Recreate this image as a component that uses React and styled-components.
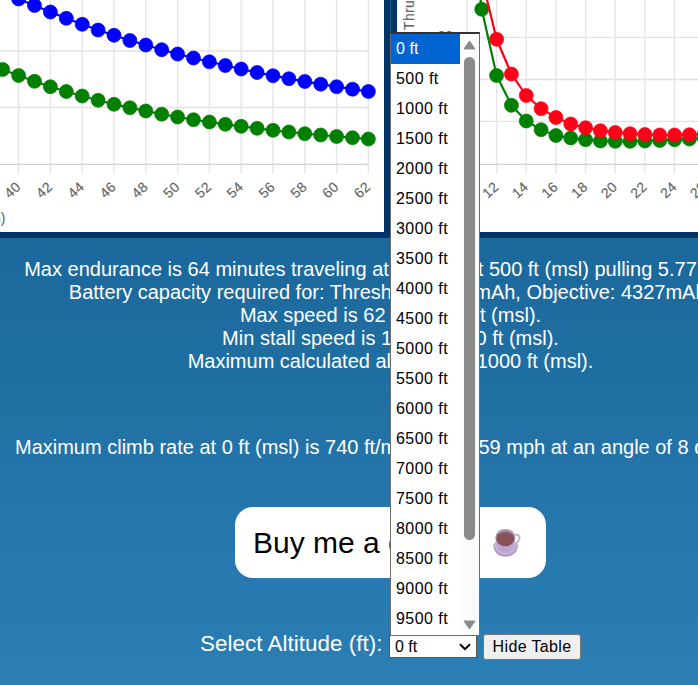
import React from 'react';
import styled, { createGlobalStyle } from 'styled-components';

const Global = createGlobalStyle`
  * { box-sizing: border-box; }
  html, body { margin: 0; height: 685px; overflow: hidden; }
  body { font-family: "Liberation Sans", Arial, sans-serif; }
`;

const Page = styled.div`
  position: relative;
  width: 698px;
  height: 685px;
  overflow: hidden;
  background: linear-gradient(to bottom, #135e8f 0, #1b689b 238px, #2b7fb5 685px);
`;

const Content = styled.div`
  width: 781px;
  display: flex;
  flex-direction: column;
  align-items: center;
`;

const Charts = styled.div`
  width: 781px;
  height: 238px;
  display: flex;
  gap: 1px;
`;

const ChartPanel = styled.div`
  flex: 0 0 390px;
  height: 238px;
  background: #fff;
  border: solid #003366;
  border-width: ${(p) => (p.$first ? '0 6px 6px 0' : '0 0 6px 6px')};
  overflow: hidden;
  svg { display: block; }
`;

const ChartText = styled.text`
  font-family: "Liberation Sans", Arial, sans-serif;
  font-size: 14px;
  fill: #666;
  stroke: #666;
  stroke-width: 0.15px;
  letter-spacing: ${(p) => p.$spacing || 0}px;
`;

const Stats = styled.section`
  margin-top: 20px;
  font-size: 20px;
  line-height: 23px;
  color: #fff;
  text-align: center;
  white-space: nowrap;
`;

const Stat = styled.div`
  height: 23px;
  margin-top: ${(p) => p.$gap || 0}px;
  padding-left: ${(p) => p.$indent || 0}px;
`;

const CoffeeButton = styled.button`
  margin-top: 48px;
  width: 311px;
  height: 71px;
  border: 0;
  border-radius: 18px;
  padding: 0 25px 0 18px;
  background: #fff;
  color: #000;
  display: flex;
  align-items: center;
  justify-content: space-between;
  font: 30px "Liberation Sans", Arial, sans-serif;
`;

const Controls = styled.div`
  width: 381px;
  height: 26px;
  margin-top: 56px;
  display: flex;
  align-items: flex-start;
`;

const Label = styled.label`
  width: 189px;
  font-size: 22.4px;
  line-height: 26px;
  letter-spacing: 0.04px;
  margin-top: -3px;
  color: #fff;
  white-space: nowrap;
`;

const Select = styled.div`
  width: 88px;
  height: 23px;
  margin-top: 1px;
  border: 1px solid #555;
  background: #fff;
  color: #000;
  padding: 0 5px;
  display: flex;
  align-items: center;
  justify-content: space-between;
  font-size: 16px;
  line-height: 20px;
`;

const HideButton = styled.button`
  width: 98px;
  height: 26px;
  margin-left: 6px;
  padding: 0;
  border: 1px solid #767676;
  border-radius: 3px;
  background: #efefef;
  color: #000;
  font: 16px "Liberation Sans", Arial, sans-serif;
  letter-spacing: 0.35px;
`;

const Popup = styled.div`
  position: absolute;
  left: 390px;
  top: 32px;
  width: 90px;
  height: 604px;
  border: 1px solid #6b6b6b;
  border-top: 2px solid #333;
  background: #fff;
  display: flex;
`;

const Options = styled.div`
  width: 69px;
`;

const Option = styled.div`
  height: 30px;
  padding-left: 5px;
  font-size: 16px;
  line-height: 29px;
  letter-spacing: ${(p) => (p.$selected ? 0.1 : 0.45)}px;
  white-space: nowrap;
  background: ${(p) => (p.$selected ? '#0064d2' : '#fff')};
  color: ${(p) => (p.$selected ? '#fff' : '#000')};
`;

const ScrollTrack = styled.div`
  width: 19px;
  height: 601px;
  background: #fcfcfc;
  display: flex;
  flex-direction: column;
  align-items: center;
  padding: 6px 0 5px;
  svg { display: block; }
`;

const Thumb = styled.div`
  width: 11px;
  height: 483px;
  margin: 7px 0 auto;
  border-radius: 6px;
  background: #8b8b8b;
`;

function Series({ points, color }) {
  return (
    <g fill={color} stroke={color}>
      <polyline points={points.map((p) => p.join(',')).join(' ')} fill="none" strokeWidth="2.2" />
      {points.map(([x, y]) => <circle key={x} cx={x} cy={y} r="7" strokeWidth="0.7" />)}
    </g>
  );
}

function XTicks({ first, count, x0, step }) {
  return Array.from({ length: count }, (_, i) => {
    const x = x0 + i * step;
    return (
      <g key={i}>
        <path d={`M${x} 0V174`} stroke="#e6e6e6" strokeWidth="1.4" />
        <ChartText $spacing={0.3} textAnchor="end" transform={`translate(${x + 3} 188) rotate(-43)`}>{first + i * 2}</ChartText>
      </g>
    );
  });
}

const series = (x0, step, ys) => ys.map((y, i) => [x0 + i * step, y]);

const L = 15.9;
const blue = series(18.6 - L, L, [-8, -1, 5.5, 12, 18.3, 24.3, 30, 35.3, 40.5, 45, 49.7, 54, 58, 61.8, 65.5, 69, 72.5, 75.7, 78.7, 81.5, 84.2, 86.7, 89.2, 91.5]);
const greenLeft = series(18.6 - L, L, [69.5, 75.5, 81.3, 86.7, 91.5, 96, 100.3, 104.3, 107.7, 111, 114.2, 117, 119.7, 122, 124.3, 126.3, 128.3, 130.3, 132, 133.7, 135, 136.5, 137.7, 139]);
const R = 14.83;
const greenRight = series(99.6 - 2 * R, R, [-105, 9.3, 75.5, 105.3, 121, 129.7, 135.5, 138, 139.7, 141, 141.3, 141.3, 141, 140.5, 139.7, 139, 138]);
const red = series(99.6 - R, R, [-22, 39.3, 74, 95.5, 108.7, 117.5, 124, 127.7, 130.7, 132.5, 133.7, 134.5, 135, 135, 134.7, 134]);

function EnduranceChart() {
  return (
    <svg width="384" height="232">
      <path d="M0 51H368M0 107.5H368" stroke="#e2e2e2" strokeWidth="1.3" />
      <XTicks first={40} count={12} x0={18.6} step={L * 2} />
      <path d="M0 164.3H368" stroke="#d0d0d0" strokeWidth="1.3" />
      <Series points={greenLeft} color="#008000" />
      <Series points={blue} color="#0000ff" />
      <ChartText x="5.500" y="223" textAnchor="end">(mph)</ChartText>
    </svg>
  );
}

function ThrustChart() {
  return (
    <svg width="384" height="232">
      <path d="M60 37.4H384M60 79.5H384M60 121.4H384M70 0V174" stroke="#e2e2e2" strokeWidth="1.3" />
      <XTicks first={12} count={8} x0={99.6} step={R * 2} />
      <path d="M60 164.3H384" stroke="#d0d0d0" strokeWidth="1.3" />
      <Series points={greenRight} color="#008000" />
      <Series points={red} color="#ff0019" />
      <ChartText x="56" y="40.5" textAnchor="end">20</ChartText>
      <ChartText $spacing={0.35} transform="translate(17 30) rotate(-90)">Thrust (oz)</ChartText>
    </svg>
  );
}

function Cup() {
  return (
    <svg width="28" height="30" viewBox="0 0 28 30">
      <path d="M0.300 17C0.300 24 5.500 28.800 12.500 28.800S25 24 25 17C24 12 1.500 11 0.300 17z" fill="#ad98c7" />
      <path d="M1 16.500C2 22.500 6.500 26.800 12.500 26.800S23 23 24.200 17C22 12 3 11 1 16.500z" fill="#c5b4d8" />
      <path d="M21 7c4.500-1.300 6.500 1.500 5 5-1 2.300-2.800 3.400-5.200 3.700" fill="none" stroke="#c0b0d2" strokeWidth="1.900" />
      <path d="M2.500 10C2.500 18 5.500 25 12.300 25S22.100 18 22.100 10z" fill="#baa7d0" />
      <ellipse cx="12.300" cy="9.300" rx="9.900" ry="8.400" fill="#a998b7" />
      <ellipse cx="12.300" cy="10.800" rx="9" ry="7.400" fill="#875156" />
      <path d="M4 7.800C6 2.800 18.600 2.800 20.600 7.800C17 4.800 8 4.800 4 7.800z" fill="#806a7c" />
    </svg>
  );
}

export default function App() {
  return (
    <Page>
      <Global />
      <Content>
        <Charts>
          <ChartPanel $first><EnduranceChart /></ChartPanel>
          <ChartPanel><ThrustChart /></ChartPanel>
        </Charts>
        <Stats>
          <Stat>Max endurance is 64 minutes traveling at 20 mph at 500 ft (msl) pulling 5.77 amps.</Stat>
          <Stat>Battery capacity required for: Threshold: 3245mAh, Objective: 4327mAh.</Stat>
          <Stat>Max speed is 62 mph at 0 ft (msl).</Stat>
          <Stat>Min stall speed is 16 mph at 0 ft (msl).</Stat>
          <Stat>Maximum calculated altitude is 21000 ft (msl).</Stat>
          <Stat $gap={63} $indent={6}>Maximum climb rate at 0 ft (msl) is 740 ft/min speed 59 mph at an angle of 8 degrees.</Stat>
        </Stats>
        <CoffeeButton>Buy me a coffee<Cup /></CoffeeButton>
        <Controls>
          <Label>Select Altitude (ft):</Label>
          <Select>
            0 ft
            <svg width="12" height="8" viewBox="0 0 12 8"><path d="M1 1.200L6 6.200L11 1.200" fill="none" stroke="#000" strokeWidth="2" /></svg>
          </Select>
          <HideButton>Hide Table</HideButton>
        </Controls>
      </Content>
      <Popup>
        <Options>
          {Array.from({ length: 20 }, (_, i) => (
            <Option key={i} $selected={i === 0}>{i * 500} ft</Option>
          ))}
        </Options>
        <ScrollTrack>
          <svg width="13" height="10"><path d="M6.500 1L12 9H1z" fill="#8b8b8b" stroke="#8b8b8b" strokeLinejoin="round" /></svg>
          <Thumb />
          <svg width="13" height="10"><path d="M6.500 9L12 1H1z" fill="#8b8b8b" stroke="#8b8b8b" strokeLinejoin="round" /></svg>
        </ScrollTrack>
      </Popup>
    </Page>
  );
}
